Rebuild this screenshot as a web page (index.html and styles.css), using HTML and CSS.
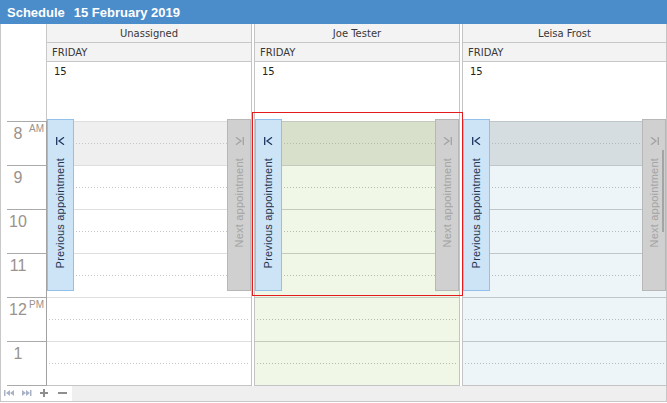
FILE: index.html
```html
<!DOCTYPE html>
<html>
<head>
<meta charset="utf-8">
<link rel="stylesheet" href="styles.css">
</head>
<body>
<div class="scheduler">
  <div class="titlebar"><span>Schedule</span><span>15 February 2019</span></div>
  <div class="main">
    <div class="ruler">
      <div class="ruler-head"></div>
      <div class="rhour"><span class="num">8</span><span class="mer">AM</span></div>
      <div class="rhour"><span class="num">9</span></div>
      <div class="rhour"><span class="num">10</span></div>
      <div class="rhour"><span class="num">11</span></div>
      <div class="rhour"><span class="num">12</span><span class="mer">PM</span></div>
      <div class="rhour"><span class="num">1</span></div>
      <div class="rend"></div>
    </div>
    <div class="cols">
      <div class="col col-un">
        <div class="res">Unassigned</div>
        <div class="day">FRIDAY</div>
        <div class="allday">15</div>
        <div class="slots">
          <div class="hour off"></div><div class="hour"></div><div class="hour"></div>
          <div class="hour"></div><div class="hour"></div><div class="hour"></div>
          <div class="nav prev">
            <svg class="ico" width="9" height="8" viewBox="0 0 9 8"><path d="M0.7 0v8M8 0.3L3 4l5 3.7" fill="none" stroke="#1e3562" stroke-width="1.3"/></svg>
            <span class="vtext">Previous appointment</span>
          </div>
          <div class="nav next">
            <svg class="ico" width="9" height="8" viewBox="0 0 9 8"><path d="M8.3 0v8M1 0.3L6 4l-5 3.7" fill="none" stroke="#a2a2a2" stroke-width="1.3"/></svg>
            <span class="vtext">Next appointment</span>
          </div>
        </div>
      </div>
      <div class="col col-joe">
        <div class="res">Joe Tester</div>
        <div class="day">FRIDAY</div>
        <div class="allday">15</div>
        <div class="slots">
          <div class="hour off"></div><div class="hour"></div><div class="hour"></div>
          <div class="hour"></div><div class="hour"></div><div class="hour"></div>
          <div class="nav prev">
            <svg class="ico" width="9" height="8" viewBox="0 0 9 8"><path d="M0.7 0v8M8 0.3L3 4l5 3.7" fill="none" stroke="#1e3562" stroke-width="1.3"/></svg>
            <span class="vtext">Previous appointment</span>
          </div>
          <div class="nav next">
            <svg class="ico" width="9" height="8" viewBox="0 0 9 8"><path d="M8.3 0v8M1 0.3L6 4l-5 3.7" fill="none" stroke="#a2a2a2" stroke-width="1.3"/></svg>
            <span class="vtext">Next appointment</span>
          </div>
        </div>
      </div>
      <div class="col col-leisa">
        <div class="res">Leisa Frost</div>
        <div class="day">FRIDAY</div>
        <div class="allday">15</div>
        <div class="slots">
          <div class="hour off"></div><div class="hour"></div><div class="hour"></div>
          <div class="hour"></div><div class="hour"></div><div class="hour"></div>
          <div class="nav prev">
            <svg class="ico" width="9" height="8" viewBox="0 0 9 8"><path d="M0.7 0v8M8 0.3L3 4l5 3.7" fill="none" stroke="#1e3562" stroke-width="1.3"/></svg>
            <span class="vtext">Previous appointment</span>
          </div>
          <div class="nav next">
            <svg class="ico" width="9" height="8" viewBox="0 0 9 8"><path d="M8.3 0v8M1 0.3L6 4l-5 3.7" fill="none" stroke="#a2a2a2" stroke-width="1.3"/></svg>
            <span class="vtext">Next appointment</span>
          </div>
          <div class="scrollthumb"></div>
        </div>
      </div>
    </div>
  </div>
  <div class="footer">
    <div class="pager">
      <svg width="70" height="15" viewBox="0 0 70 15">
        <g fill="#a9b3c5">
          <rect x="3" y="4" width="1.5" height="6"/>
          <path d="M9 4L5 7l4 3z"/>
          <path d="M13 4L9 7l4 3z"/>
          <path d="M21 4l4 3-4 3z"/>
          <path d="M25 4l4 3-4 3z"/>
          <rect x="29" y="4" width="1.5" height="6"/>
        </g>
        <g fill="#8e8e8e">
          <rect x="39" y="6" width="8" height="2"/>
          <rect x="42" y="3" width="2" height="8"/>
          <rect x="57" y="6" width="9" height="2"/>
        </g>
      </svg>
    </div>
  </div>
  <div class="selection"></div>
</div>
</body>
</html>
```

FILE: styles.css
```css
* { box-sizing: border-box; margin: 0; padding: 0; }
html, body { width: 667px; height: 403px; overflow: hidden; background: #fff; }
body { font-family: "DejaVu Sans", sans-serif; font-size: 10px; color: #383838; }

.scheduler { position: relative; width: 667px; height: 403px; display: flex; flex-direction: column; }

.titlebar {
  height: 24px; flex: none;
  background: #4b8dcb; color: #fff;
  font: bold 13px/23px "Liberation Sans", sans-serif;
  padding: 1px 0 0 7px;
  display: flex; gap: 9px; white-space: nowrap;
}

.main { display: flex; height: 362px; flex: none; }

.ruler { width: 47px; flex: none; border-left: 1px solid #c8c8c8; display: flex; flex-direction: column; background: #fff; }
.ruler-head { height: 97px; border-right: 1px solid #c8c8c8; }
.rhour {
  height: 44px; margin-left: 6px;
  border-top: 1px solid #aaaaaa; border-right: 1px solid #a2a2a2;
  display: flex; align-items: flex-start; padding-top: 3px;
  color: #9a928c;
  font-family: "Liberation Sans", sans-serif;
}
.num { width: 22px; text-align: center; font-size: 16px; line-height: 18px; }
.mer { font-size: 10px; line-height: 10px; margin-top: -1px; }
.rend { height: 1px; margin-left: 6px; background: #aaaaaa; }

.cols { display: grid; grid-template-columns: 205px 206px 205px; column-gap: 2px; width: 620px; }
.col { display: flex; flex-direction: column; border-right: 1px solid #c4c4c4; }
.col-joe, .col-leisa { border-left: 1px solid #c4c4c4; }

.col-un    { --bg: #ffffff; --off: #efefef; --line: #dedede; --dot: #c6c6c6; }
.col-joe   { --bg: #f0f7e6; --off: #d8e0cc; --line: #c3cabb; --dot: #b4bcaa; }
.col-leisa { --bg: #edf5f9; --off: #d5dde1; --line: #bfc7cb; --dot: #b3bbbf; }

.res, .day {
  height: 19px; background: #f3f3f3; border-bottom: 1px solid #c8c8c8;
  padding-top: 2px; line-height: 16px; white-space: nowrap;
}
.res { text-align: center; }
.day { padding-left: 5px; }
.allday { height: 59px; padding: 2px 0 0 7px; line-height: 16px; color: #222; background: #fff; }

.slots { position: relative; height: 265px; border-bottom: 1px solid #c4c4c4; }
.hour { position: relative; height: 44px; border-top: 1px solid var(--line); background: var(--bg); }
.hour.off { background: var(--off); }
.hour::after {
  content: ""; position: absolute; left: 2px; right: 2px; top: 21px; height: 1px;
  background: linear-gradient(to right, var(--dot) 1px, transparent 1px) 0 0 / 3px 1px repeat-x;
}

.nav {
  position: absolute; top: -2px; height: 172px; z-index: 2;
  display: flex; flex-direction: column; align-items: center;
  font-family: "Liberation Sans", sans-serif; font-size: 11px;
}
.prev { left: 0; width: 27px; background: #cde4f7; border: 1px solid #92c0ea; color: #24344f; }
.next { right: 0; width: 24px; background: #d0d0d0; border: 1px solid #b7b7b7; color: #a4a4a4; }
.ico { display: block; margin-top: 17px; flex: none; }
.vtext {
  display: block; margin-top: 13px;
  writing-mode: vertical-rl; transform: rotate(180deg);
  line-height: 13px; white-space: nowrap; letter-spacing: 0.2px;
}

.scrollthumb { position: absolute; right: 2px; top: 29px; width: 2px; height: 82px; background: #a4a4a4; z-index: 3; }

.footer {
  height: 16px; flex: none;
  background: #efefef;
  border-left: 1px solid #c8c8c8; border-right: 1px solid #c8c8c8; border-bottom: 1px solid #c8c8c8;
  display: flex;
}
.pager { width: 71px; height: 15px; background: #fff; }
.pager svg { display: block; }

.selection {
  position: absolute; left: 252px; top: 112px; width: 211px; height: 184px;
  border: 1px solid #e41b1b; z-index: 5; pointer-events: none;
}
```
